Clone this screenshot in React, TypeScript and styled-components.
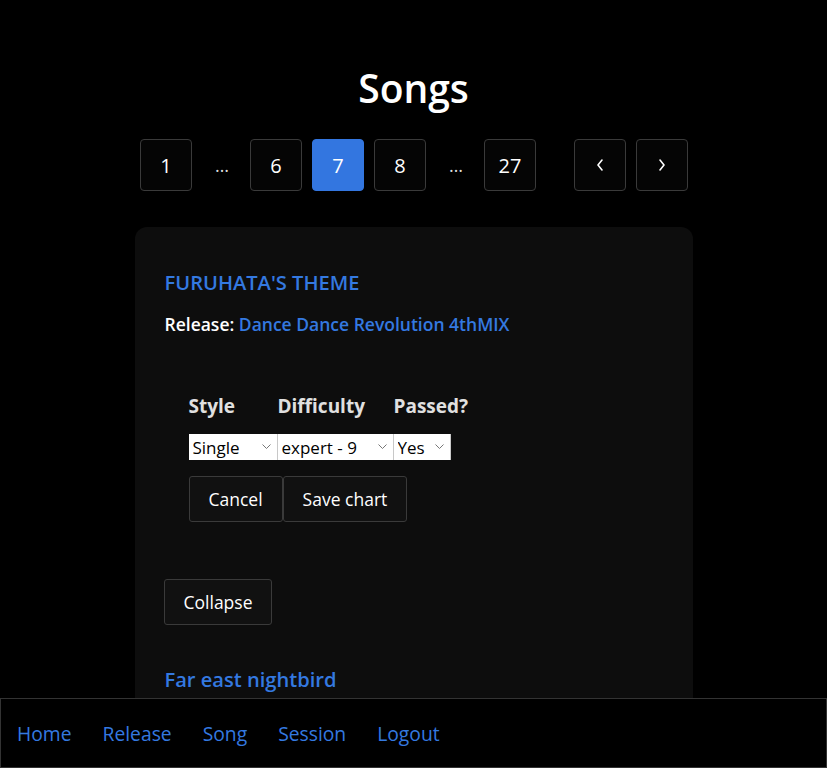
import React from "react";
import styled, { createGlobalStyle } from "styled-components";

const Global = createGlobalStyle`
  html, body { margin: 0; padding: 0; background: #000; }
  body { font-family: "Open Sans", "Noto Sans", sans-serif; color: #fff; }
  * { box-sizing: border-box; }
`;

const Page = styled.div`
  display: flex;
  flex-direction: column;
  align-items: center;
  padding-top: 62px;
  padding-bottom: 90px;
`;

const Title = styled.h1`
  margin: 0;
  font-size: 39px;
  font-weight: 600;
  line-height: 52px;
  color: #fff;
`;

const Pager = styled.div`
  display: flex;
  align-items: center;
  gap: 10px;
  margin-top: 25px;
  margin-left: 1px;
`;

const PageBtn = styled.button<{ $active?: boolean }>`
  width: 52px;
  height: 52px;
  border-radius: 4px;
  border: 1px solid ${(p) => (p.$active ? "#3376e0" : "#3a3a3a")};
  background: ${(p) => (p.$active ? "#3376e0" : "#050505")};
  color: #fff;
  font-family: inherit;
  font-size: 20px;
  display: flex;
  align-items: center;
  justify-content: center;
  padding: 0;
`;

const Ellipsis = styled.span`
  width: 38px;
  text-align: center;
  color: #ddd;
  font-size: 18px;
  padding-left: 2px;
`;

const Spacer = styled.span`
  width: 18px;
`;

const Card = styled.div`
  margin-top: 36px;
  width: 558px;
  background: #0d0d0d;
  border-radius: 12px;
  padding: 41px 30px 60px;
`;

const SongTitle = styled.a`
  display: block;
  color: #3479e0;
  font-size: 20.1px;
  font-weight: 600;
  line-height: 30px;
  text-decoration: none;
`;

const ReleaseLine = styled.div`
  margin-top: 14px;
  font-size: 17.5px;
  font-weight: 600;
  line-height: 24px;
  color: #fff;
`;

const Link = styled.a`
  color: #3479e0;
  text-decoration: none;
`;

const Editor = styled.div`
  margin-top: 57px;
  margin-left: 24px;
`;

const Grid = styled.div`
  display: grid;
  grid-template-columns: 89px 116px 57px;
  width: max-content;
`;

const Head = styled.div`
  font-size: 19px;
  font-weight: 700;
  color: #e0e0e0;
  line-height: 26px;
  height: 41px;
`;

const SelectWrap = styled.div`
  position: relative;
  height: 26px;
  background: #fff;
  border-right: 1px solid #c8c8c8;
`;

const Select = styled.select`
  appearance: none;
  -webkit-appearance: none;
  width: 100%;
  height: 100%;
  border: none;
  background: transparent;
  font-family: inherit;
  font-size: 17px;
  color: #000;
  padding: 0 20px 0 4px;
  outline: none;
`;

const Chevron = styled.svg`
  position: absolute;
  right: 6px;
  top: 10px;
  pointer-events: none;
`;

const ButtonRow = styled.div`
  display: flex;
  margin-top: 16px;
`;

const Btn = styled.button`
  height: 46px;
  padding: 0 19px;
  background: #111;
  color: #fff;
  border: 1px solid #3a3a3a;
  border-radius: 3px;
  font-family: inherit;
  font-size: 17.5px;
`;

const CollapseRow = styled.div`
  margin-top: 57px;
  margin-left: -1px;
`;

const NextSong = styled(SongTitle)`
  margin-top: 40px;
`;

const Nav = styled.nav`
  position: fixed;
  left: 0;
  right: 0;
  bottom: 0;
  height: 70px;
  background: #000;
  border: 1px solid #333;
  display: flex;
  align-items: center;
  gap: 31px;
  padding-left: 16px;
`;

const NavLink = styled.a`
  color: #3479e0;
  font-size: 19.3px;
  text-decoration: none;
`;

const Drop = ({ value, options }: { value: string; options: string[] }) => (
  <SelectWrap>
    <Select defaultValue={value}>
      {options.map((o) => (
        <option key={o}>{o}</option>
      ))}
    </Select>
    <Chevron width="9" height="6" viewBox="0 0 9 6">
      <path d="M0.5 0.5 L4.5 4.5 L8.5 0.5" fill="none" stroke="#777" strokeWidth="1" />
    </Chevron>
  </SelectWrap>
);

const Arrow = ({ dir }: { dir: "left" | "right" }) => (
  <svg width="8" height="12" viewBox="0 0 8 12">
    <path
      d={dir === "left" ? "M6 1 L2 6 L6 11" : "M2 1 L6 6 L2 11"}
      fill="none"
      stroke="#fff"
      strokeWidth="1.6"
      strokeLinecap="round"
      strokeLinejoin="round"
    />
  </svg>
);

export default function App() {
  return (
    <>
      <Global />
      <Page>
        <Title>Songs</Title>
        <Pager>
          <PageBtn>1</PageBtn>
          <Ellipsis>…</Ellipsis>
          <PageBtn>6</PageBtn>
          <PageBtn $active>7</PageBtn>
          <PageBtn>8</PageBtn>
          <Ellipsis>…</Ellipsis>
          <PageBtn>27</PageBtn>
          <Spacer />
          <PageBtn aria-label="previous">
            <Arrow dir="left" />
          </PageBtn>
          <PageBtn aria-label="next">
            <Arrow dir="right" />
          </PageBtn>
        </Pager>
        <Card>
          <SongTitle href="#">FURUHATA'S THEME</SongTitle>
          <ReleaseLine>
            Release: <Link href="#">Dance Dance Revolution 4thMIX</Link>
          </ReleaseLine>
          <Editor>
            <Grid>
              <Head>Style</Head>
              <Head>Difficulty</Head>
              <Head>Passed?</Head>
              <Drop value="Single" options={["Single", "Double"]} />
              <Drop value="expert - 9" options={["basic - 4", "difficult - 7", "expert - 9"]} />
              <Drop value="Yes" options={["Yes", "No"]} />
            </Grid>
            <ButtonRow>
              <Btn>Cancel</Btn>
              <Btn>Save chart</Btn>
            </ButtonRow>
          </Editor>
          <CollapseRow>
            <Btn>Collapse</Btn>
          </CollapseRow>
          <NextSong href="#">Far east nightbird</NextSong>
        </Card>
      </Page>
      <Nav>
        <NavLink href="#">Home</NavLink>
        <NavLink href="#">Release</NavLink>
        <NavLink href="#">Song</NavLink>
        <NavLink href="#">Session</NavLink>
        <NavLink href="#">Logout</NavLink>
      </Nav>
    </>
  );
}
